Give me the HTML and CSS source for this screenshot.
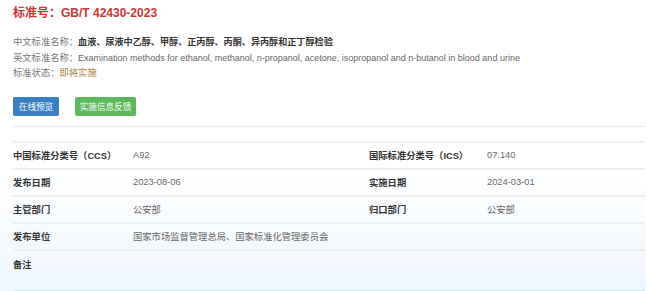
FILE: index.html
```html
<!DOCTYPE html>
<html lang="zh-CN">
<head>
  <meta charset="UTF-8">
  <title>标准号：GB/T 42430-2023</title>
  <link rel="stylesheet" href="styles.css">
</head>
<body>
  <div class="panel">
    <h1 class="std-title">标准号：GB/T 42430-2023</h1>

    <div class="info">
      <p><span class="info-label">中文标准名称：</span><b class="info-name">血液、尿液中乙醇、甲醇、正丙醇、丙酮、异丙醇和正丁醇检验</b></p>
      <p><span class="info-label">英文标准名称：</span><span class="info-en">Examination methods for ethanol, methanol, n-propanol, acetone, isopropanol and n-butanol in blood and urine</span></p>
      <p><span class="info-label">标准状态：</span><span class="info-state">即将实施</span></p>
    </div>

    <div class="actions">
      <button class="btn btn-blue">在线预览</button>
      <button class="btn btn-green">实施信息反馈</button>
    </div>

    <div class="meta">
      <div class="meta-row">
        <span class="meta-label">中国标准分类号（CCS）</span>
        <span class="meta-value">A92</span>
        <span class="meta-label">国际标准分类号（ICS）</span>
        <span class="meta-value">07.140</span>
      </div>
      <div class="meta-row">
        <span class="meta-label">发布日期</span>
        <span class="meta-value">2023-08-06</span>
        <span class="meta-label">实施日期</span>
        <span class="meta-value">2024-03-01</span>
      </div>
      <div class="meta-row">
        <span class="meta-label">主管部门</span>
        <span class="meta-value">公安部</span>
        <span class="meta-label">归口部门</span>
        <span class="meta-value">公安部</span>
      </div>
      <div class="meta-row">
        <span class="meta-label">发布单位</span>
        <span class="meta-value wide">国家市场监督管理总局、国家标准化管理委员会</span>
      </div>
      <div class="meta-row last">
        <span class="meta-label">备注</span>
        <span class="meta-value wide"></span>
      </div>
    </div>
  </div>
</body>
</html>
```

FILE: styles.css
```css
body {
  margin: 0;
  font-family: "Liberation Sans", Arial, "Noto Sans CJK SC", sans-serif;
  font-size: 9.3px;
  color: #333;
  background: #fff;
}

.panel {
  width: 632px;
  height: 291px;
  padding-left: 13px;
  background: linear-gradient(to bottom, #fff 0, #fff 165px, #eef6fd 100%);
}

.std-title {
  margin: 0;
  padding-top: 4px;
  font-size: 12px;
  line-height: 18px;
  color: #cf3434;
  font-weight: bold;
}

.info {
  margin-top: 13px;
}

.info p {
  margin: 0;
  line-height: 15.5px;
}

.info-label {
  color: #777;
}

.info-name {
  color: #333;
  font-size: 9.1px;
}

.info-en {
  color: #666;
  font-size: 9px;
}

.info-state {
  color: #a9843e;
}

.actions {
  display: flex;
  gap: 16px;
  margin-top: 15px;
  padding-bottom: 10px;
  border-bottom: 1px dotted #d6d6d6;
}

.btn {
  height: 19px;
  padding: 0;
  border: none;
  border-radius: 2px;
  color: #fff;
  font-family: inherit;
  font-size: 8.6px;
  white-space: nowrap;
}

.btn-blue {
  width: 46px;
  background-color: #3a7fc1;
}

.btn-green {
  width: 61px;
  background-color: #5cb85c;
}

.meta {
  margin-top: 14px;
  border-top: 2px solid #f0f0f0;
  border-bottom: 1px solid #d4e8f8;
}

.meta-row {
  display: grid;
  grid-template-columns: 120px 236px 118px 1fr;
  align-items: center;
  height: 25px;
  border-bottom: 2px solid #eeeeee;
}

.meta-row.last {
  height: 39px;
  border-bottom: none;
  align-items: start;
  padding-top: 6px;
  box-sizing: border-box;
}

.meta-label {
  font-weight: bold;
  color: #333;
}

.meta-value {
  color: #666;
}

.meta-value.wide {
  grid-column: 2 / 5;
}
```
